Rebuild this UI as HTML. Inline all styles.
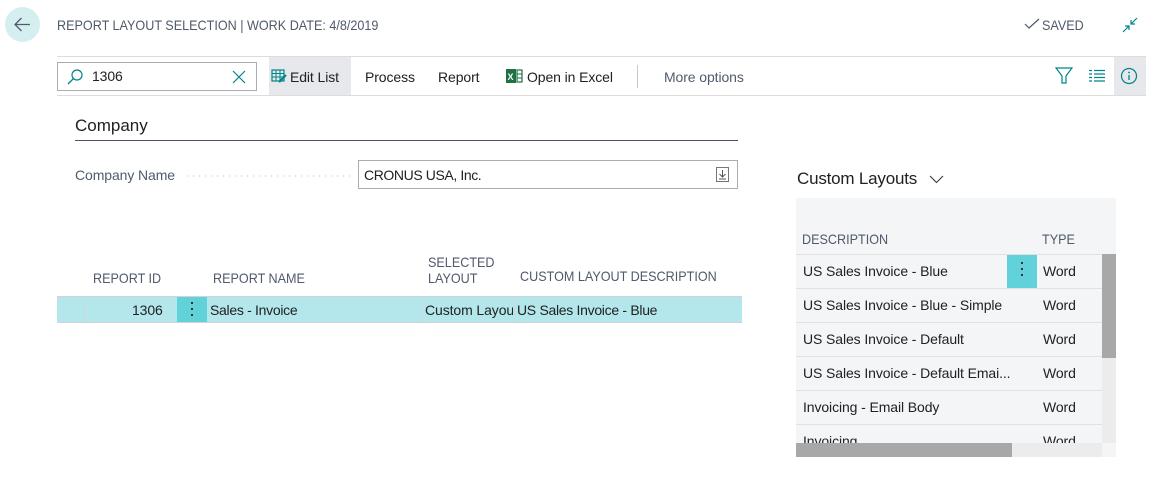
<!DOCTYPE html>
<html><head><meta charset="utf-8"><style>
*{margin:0;padding:0;box-sizing:border-box}
body{width:1166px;height:479px;background:#fff;position:relative;overflow:hidden;font-family:"Liberation Sans",sans-serif;color:#212121}
.a{position:absolute;white-space:nowrap}
.cond{display:inline-block;transform:scaleX(.9);transform-origin:left center}
.hd{font-size:13px;color:#4f5a6a}
.t{font-size:14px;letter-spacing:-.1px}
.row{position:absolute;left:796px;width:306px;height:34px;border-bottom:1px solid #dfe1e5}
</style></head><body>
<div class="a" style="left:5px;top:7px;width:35px;height:35px;border-radius:50%;background:#d5eff1"></div>
<svg class="a" style="left:13px;top:15px" width="19" height="19" viewBox="0 0 19 19"><path d="M17 9.5H2M8.5 3L2 9.5 8.5 16" stroke="#505c6d" stroke-width="1.3" fill="none"/></svg>
<div class="a hd" style="left:57px;top:17px;font-size:14px"><span class="cond">REPORT LAYOUT SELECTION | WORK DATE: 4/8/2019</span></div>
<svg class="a" style="left:1024px;top:18px" width="16" height="12"><path d="M1 6l4 4 10-9" stroke="#505c6d" stroke-width="1.2" fill="none"/></svg>
<div class="a hd" style="left:1042px;top:17px;font-size:14px"><span class="cond">SAVED</span></div>
<svg class="a" style="left:1121px;top:16px" width="18" height="18"><path d="M2 16l6-6M4 10h4v4M16 2l-6 6M10 4v4h4" stroke="#008489" stroke-width="1.2" fill="none"/></svg>
<div class="a" style="left:57px;top:56px;width:1089px;height:1px;background:#dcdcdc"></div>
<div class="a" style="left:57px;top:95px;width:1089px;height:1px;background:#dcdcdc"></div>
<div class="a" style="left:57px;top:62px;width:200px;height:29px;border:1px solid #a9adb3"></div>
<svg class="a" style="left:66px;top:68px" width="18" height="18"><circle cx="11" cy="7" r="5" stroke="#008489" stroke-width="1.2" fill="none"/><path d="M7.5 10.5L2 16" stroke="#008489" stroke-width="1.3"/></svg>
<div class="a t" style="left:92px;top:68px">1306</div>
<svg class="a" style="left:232px;top:70px" width="14" height="14"><path d="M1 1l12 12M13 1L1 13" stroke="#008489" stroke-width="1.2"/></svg>
<div class="a" style="left:269px;top:57px;width:82px;height:38px;background:#e6e8eb"></div>
<svg class="a" style="left:271px;top:69px" width="16" height="14"><rect x="1" y="1" width="12" height="11" fill="none" stroke="#008489" stroke-width="1.2"/><path d="M1 4.5h12M1 8h12M5 1v11M9 1v11" stroke="#008489"/><path d="M8 13l7-7" stroke="#008489" stroke-width="2.2"/></svg>
<div class="a t" style="left:290px;top:69px">Edit List</div>
<div class="a t" style="left:365px;top:69px">Process</div>
<div class="a t" style="left:438px;top:69px">Report</div>
<svg class="a" style="left:506px;top:68px" width="17" height="16"><rect x="0" y="1" width="10" height="14" fill="#1e7145"/><text x="1.5" y="12" font-size="9" font-weight="bold" fill="#fff" font-family="Liberation Sans">X</text><rect x="11" y="2" width="5" height="12" fill="none" stroke="#1e7145" stroke-width="1.2"/><path d="M11 6h5M11 10h5" stroke="#1e7145"/></svg>
<div class="a t" style="left:527px;top:69px">Open in Excel</div>
<div class="a" style="left:637px;top:65px;width:1px;height:23px;background:#c8c8c8"></div>
<div class="a t" style="left:664px;top:69px;color:#505c6d">More options</div>
<svg class="a" style="left:1055px;top:67px" width="18" height="17"><path d="M1 1h16l-6 8v7h-4v-7z" fill="none" stroke="#008489" stroke-width="1.2"/></svg>
<svg class="a" style="left:1089px;top:69px" width="16" height="13"><path d="M0 1.5h3M5 1.5h11M0 5h3M5 5h11M0 8.5h3M5 8.5h11M0 12h3M5 12h11" stroke="#008489" stroke-width="1.2"/></svg>
<div class="a" style="left:1114px;top:57px;width:32px;height:38px;background:#e6e8eb"></div>
<svg class="a" style="left:1120px;top:67px" width="18" height="18"><circle cx="9" cy="9" r="7.5" fill="none" stroke="#008489" stroke-width="1.2"/><path d="M9 8v5" stroke="#008489" stroke-width="1.3"/><circle cx="9" cy="5.5" r=".9" fill="#008489"/></svg>
<div class="a" style="left:75px;top:116px;font-size:17px">Company</div>
<div class="a" style="left:75px;top:140px;width:663px;height:1px;background:#4a5568"></div>
<div class="a t" style="left:75px;top:167px;color:#505c6d">Company Name</div>
<svg class="a" style="left:187px;top:175px" width="165" height="2"><line x1="0" y1="1" x2="165" y2="1" stroke="#b8bcc2" stroke-dasharray="1 5"/></svg>
<div class="a" style="left:358px;top:160px;width:380px;height:29px;border:1px solid #a9adb3"></div>
<div class="a t" style="left:364px;top:167px;letter-spacing:-.4px">CRONUS USA, Inc.</div>
<svg class="a" style="left:716px;top:167px" width="13" height="15"><rect x=".5" y=".5" width="12" height="14" fill="none" stroke="#777"/><path d="M6.5 3v7M3.5 7l3 3 3-3M3 12h7" stroke="#555" fill="none"/></svg>
<div class="a hd" style="left:93px;top:270px;font-size:14px"><span class="cond">REPORT ID</span></div>
<div class="a hd" style="left:213px;top:270px;font-size:14px"><span class="cond">REPORT NAME</span></div>
<div class="a hd" style="left:428px;top:254px;font-size:14px;line-height:16px"><span class="cond">SELECTED<br>LAYOUT</span></div>
<div class="a hd" style="left:520px;top:268px;font-size:14px"><span class="cond">CUSTOM LAYOUT DESCRIPTION</span></div>
<div class="a" style="left:57px;top:296px;width:685px;height:27px;background:#b3e7eb;border-top:1px solid #d0d4d8;border-bottom:1px solid #d0d4d8"></div>
<div class="a" style="left:84px;top:297px;width:1px;height:25px;background:#d0d8da"></div>
<div class="a" style="left:177px;top:297px;width:30px;height:25px;background:#62d2da"></div>
<div class="a" style="left:191px;top:302px;width:2px;height:2px;background:#333;box-shadow:0 6px #333,0 12px #333"></div>
<div class="a" style="left:422px;top:297px;width:1px;height:25px;background:#d0d8da"></div>
<div class="a" style="left:514px;top:297px;width:1px;height:25px;background:#d0d8da"></div>
<div class="a t" style="left:132px;top:302px">1306</div>
<div class="a t" style="left:210px;top:302px;letter-spacing:-.3px">Sales - Invoice</div>
<div class="a t" style="left:425px;top:302px;width:88px;overflow:hidden">Custom Layout</div>
<div class="a t" style="left:517px;top:302px;letter-spacing:-.3px">US Sales Invoice - Blue</div>
<div class="a" style="left:797px;top:169px;font-size:17px;letter-spacing:-.2px">Custom Layouts</div>
<svg class="a" style="left:929px;top:175px" width="15" height="9"><path d="M1 1l6.5 6.5L14 1" stroke="#333" fill="none"/></svg>
<div class="a" style="left:796px;top:198px;width:320px;height:259px;background:#f4f5f7"></div>
<div class="a hd" style="left:802px;top:231px;font-size:14px"><span class="cond">DESCRIPTION</span></div>
<div class="a hd" style="left:1042px;top:231px;font-size:14px"><span class="cond">TYPE</span></div>
<div class="row" style="top:254px;height:1px;border:0;background:#dfe1e5"></div>
<div class="row" style="top:255px"></div><div class="row" style="top:289px"></div><div class="row" style="top:323px"></div><div class="row" style="top:357px"></div><div class="row" style="top:391px"></div>
<div class="a" style="left:1007px;top:255px;width:30px;height:33px;background:#62d2da"></div>
<div class="a" style="left:1021px;top:262px;width:2px;height:2px;background:#333;box-shadow:0 6px #333,0 12px #333"></div>
<div class="a t" style="left:803px;top:263px">US Sales Invoice - Blue</div>
<div class="a t" style="left:803px;top:297px">US Sales Invoice - Blue - Simple</div>
<div class="a t" style="left:803px;top:331px">US Sales Invoice - Default</div>
<div class="a t" style="left:803px;top:365px">US Sales Invoice - Default Emai...</div>
<div class="a t" style="left:803px;top:399px">Invoicing - Email Body</div>
<div class="a t" style="left:803px;top:433px">Invoicing</div>
<div class="a t" style="left:1043px;top:263px">Word</div><div class="a t" style="left:1043px;top:297px">Word</div><div class="a t" style="left:1043px;top:331px">Word</div><div class="a t" style="left:1043px;top:365px">Word</div><div class="a t" style="left:1043px;top:399px">Word</div><div class="a t" style="left:1043px;top:433px">Word</div>
<div class="a" style="left:1102px;top:254px;width:14px;height:189px;background:#ececec"></div>
<div class="a" style="left:1102px;top:254px;width:14px;height:104px;background:#a8a8a8"></div>
<div class="a" style="left:796px;top:443px;width:306px;height:14px;background:#ececec"></div>
<div class="a" style="left:796px;top:443px;width:216px;height:14px;background:#a8a8a8"></div>
</body></html>
